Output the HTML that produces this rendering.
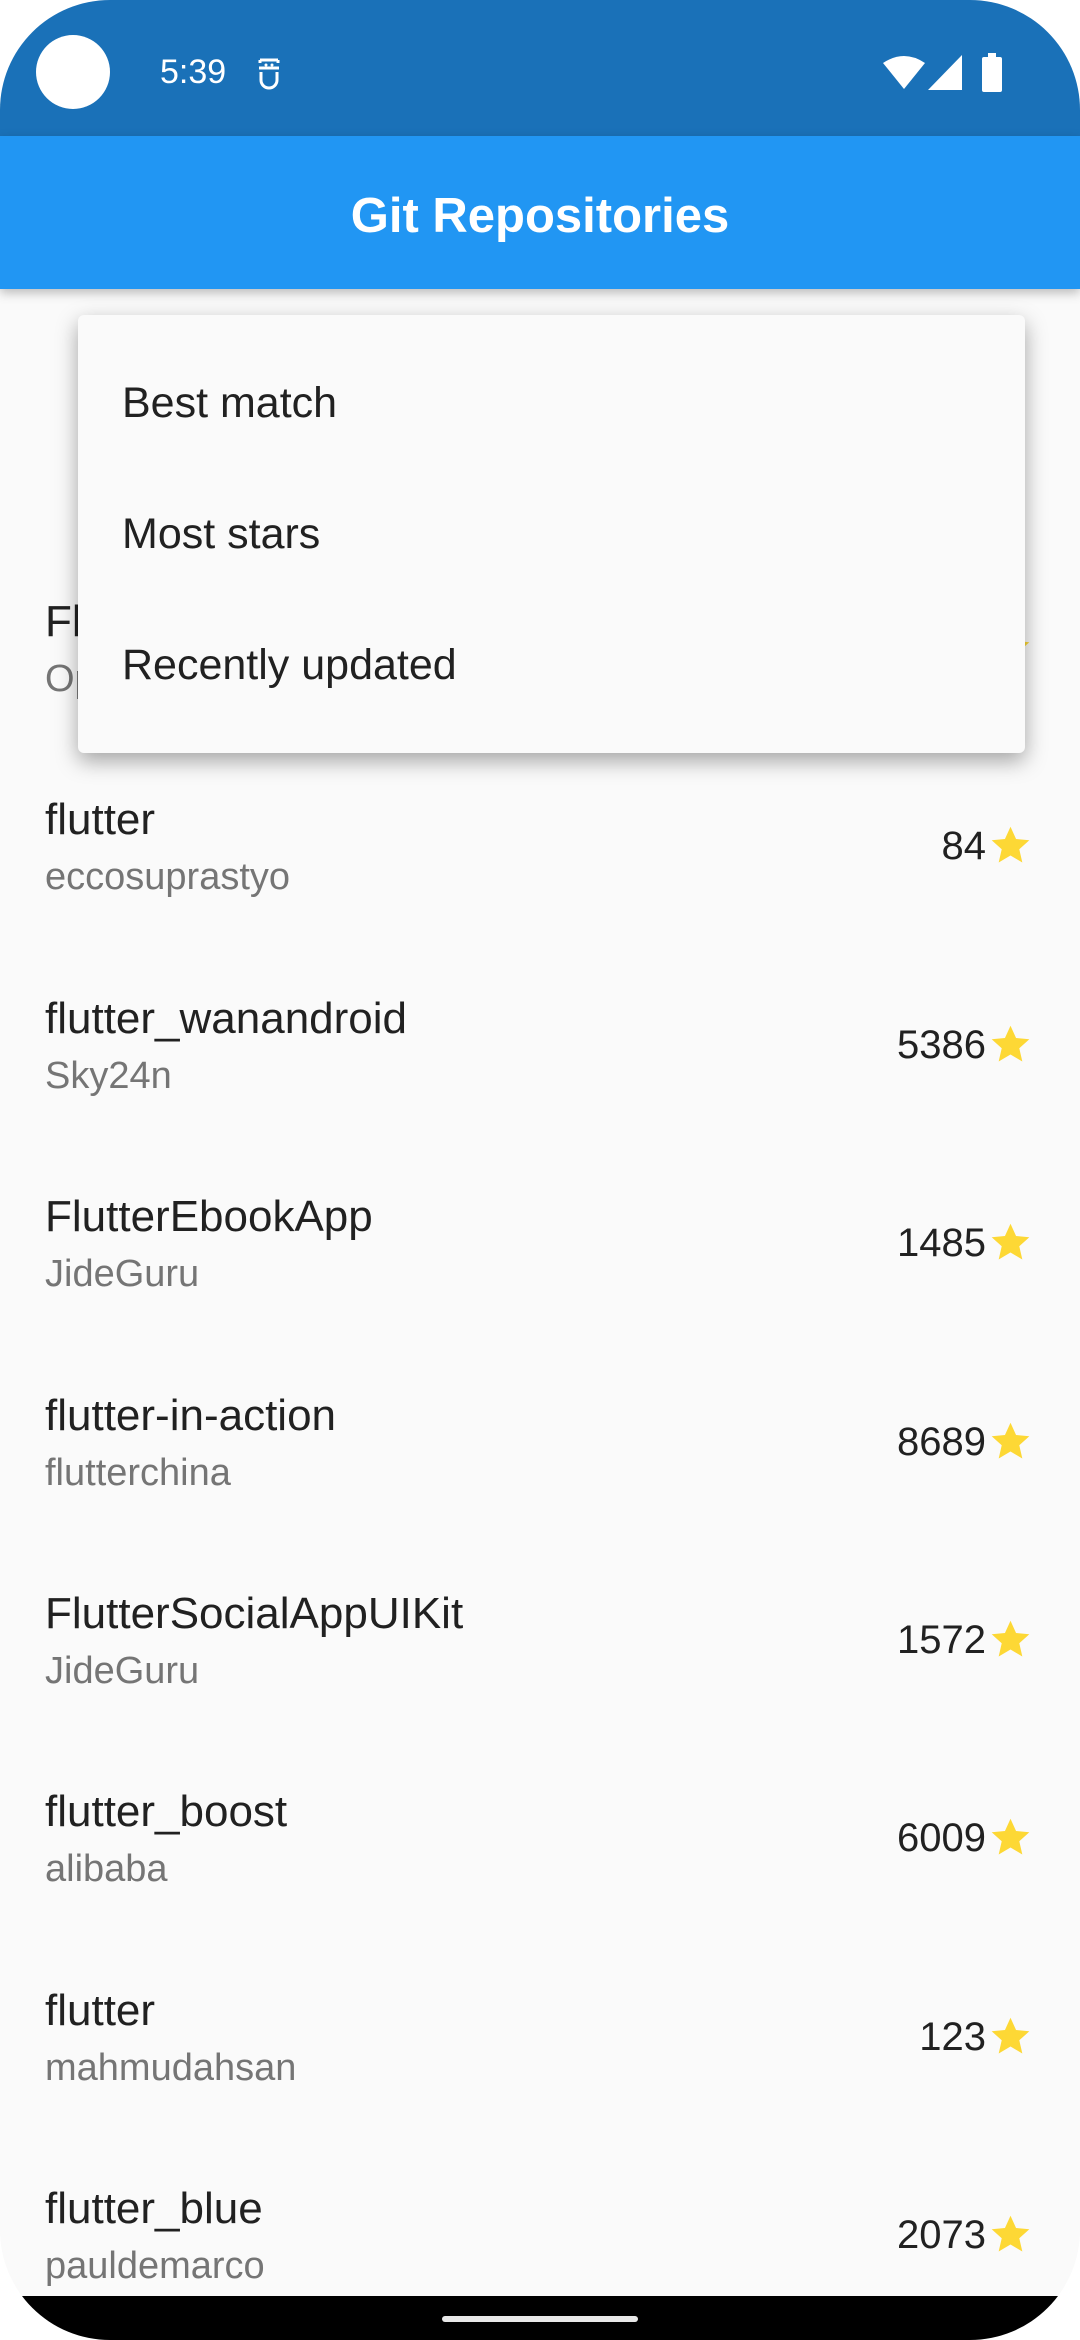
<!DOCTYPE html>
<html><head><meta charset="utf-8"><style>
*{margin:0;padding:0;box-sizing:border-box}
body{width:1080px;height:2340px;background:#fff;overflow:hidden;font-family:"Liberation Sans",sans-serif}
#s{position:absolute;left:0;top:0;width:1080px;height:2340px;border-radius:110px;overflow:hidden;background:#fafafa}
.sb{position:absolute;left:0;top:0;width:1080px;height:136px;background:#1a71b8}
.ab{position:absolute;left:0;top:136px;width:1080px;height:153px;background:#2196f3;box-shadow:0 4px 10px rgba(0,0,0,.25);z-index:2}
.ab div{position:absolute;left:0;right:0;top:4px;line-height:153px;text-align:center;color:#fff;font-size:49px;font-weight:bold}
.t{position:absolute;left:45px;font-size:44px;color:#212121;line-height:1;white-space:nowrap}
.u{position:absolute;left:45px;font-size:38px;color:#757575;line-height:1;white-space:nowrap}
.c{position:absolute;right:94px;font-size:40px;color:#212121;line-height:1}
.st{position:absolute;left:988px;width:45px;height:43px}
.menu{position:absolute;left:78px;top:315px;width:947px;height:438px;background:#fafafa;border-radius:6px;box-shadow:0 8px 22px rgba(0,0,0,.35);z-index:3}
.mi{position:absolute;left:44px;font-size:43px;color:#212121;line-height:1}
.nav{position:absolute;left:0;top:2296px;width:1080px;height:44px;background:#000}
.pill{position:absolute;left:442px;top:2316px;width:196px;height:6px;border-radius:3px;background:#e8e8e8}
</style></head><body><div id="s">
<div class="sb">
<div style="position:absolute;left:36px;top:35px;width:74px;height:74px;border-radius:50%;background:#fff"></div>
<div style="position:absolute;left:160px;top:55px;color:#fff;font-size:34px;line-height:1">5:39</div>
<svg style="position:absolute;left:256px;top:56px" width="26" height="34" viewBox="0 0 26 34"><path d="M4 4h18M4 4v3M22 4v3M3 12h20M5 16v8a8 8 0 0 0 16 0v-8" stroke="#fff" stroke-width="3" fill="none"/><circle cx="10" cy="9" r="1.5" fill="#fff"/><circle cx="16" cy="9" r="1.5" fill="#fff"/></svg>
<svg style="position:absolute;left:883px;top:55px" width="42" height="36" viewBox="0 0 42 36"><path d="M0 8Q21-6 42 8L21 34Z" fill="#fff"/></svg>
<svg style="position:absolute;left:928px;top:55px" width="36" height="36" viewBox="0 0 36 36"><path d="M34 0V35H0Z" fill="#fff"/></svg>
<svg style="position:absolute;left:982px;top:53px" width="20" height="39" viewBox="0 0 20 39"><rect x="6" y="0" width="8" height="5" fill="#fff"/><rect x="0" y="4" width="20" height="35" rx="2" fill="#fff"/></svg>
</div>
<div class="ab"><div>Git Repositories</div></div>

<div class="t" style="top:600px">Flutter-Notebook</div><div class="u" style="top:660px">OpenFlutter</div><div class="c" style="top:628px">6464</div>
<svg class="st" style="top:626px" viewBox="0 0 24 24"><path d="M12 1.5l3.1 6.9 7.4.7-5.6 5 1.7 7.4L12 17.6l-6.6 3.9 1.7-7.4-5.6-5 7.4-.7z" fill="#fdd835"/></svg>

<div id="rows"></div>

<div class="menu">
<div class="mi" style="top:67px">Best match</div>
<div class="mi" style="top:198px">Most stars</div>
<div class="mi" style="top:329px">Recently updated</div>
</div>
<div class="nav"></div><div class="pill"></div>
</div>
<script>
var d=[["flutter","eccosuprastyo","84"],["flutter_wanandroid","Sky24n","5386"],["FlutterEbookApp","JideGuru","1485"],["flutter-in-action","flutterchina","8689"],["FlutterSocialAppUIKit","JideGuru","1572"],["flutter_boost","alibaba","6009"],["flutter","mahmudahsan","123"],["flutter_blue","pauldemarco","2073"]];
var h="";
d.forEach(function(r,i){var y=620+198.4*(i+1);
h+='<div class="t" style="top:'+(y-20)+'px">'+r[0]+'</div><div class="u" style="top:'+(y+40)+'px">'+r[1]+'</div><div class="c" style="top:'+(y+8)+'px">'+r[2]+'</div>'+
'<svg class="st" style="top:'+(y+6)+'px" viewBox="0 0 24 24"><path d="M12 1.5l3.1 6.9 7.4.7-5.6 5 1.7 7.4L12 17.6l-6.6 3.9 1.7-7.4-5.6-5 7.4-.7z" fill="#fdd835"/><path d="M17 13.5l5.5-4.4-2 1.6z" fill="#f0b400"/></svg>';});
document.getElementById("rows").outerHTML=h;
</script>
</body></html>
